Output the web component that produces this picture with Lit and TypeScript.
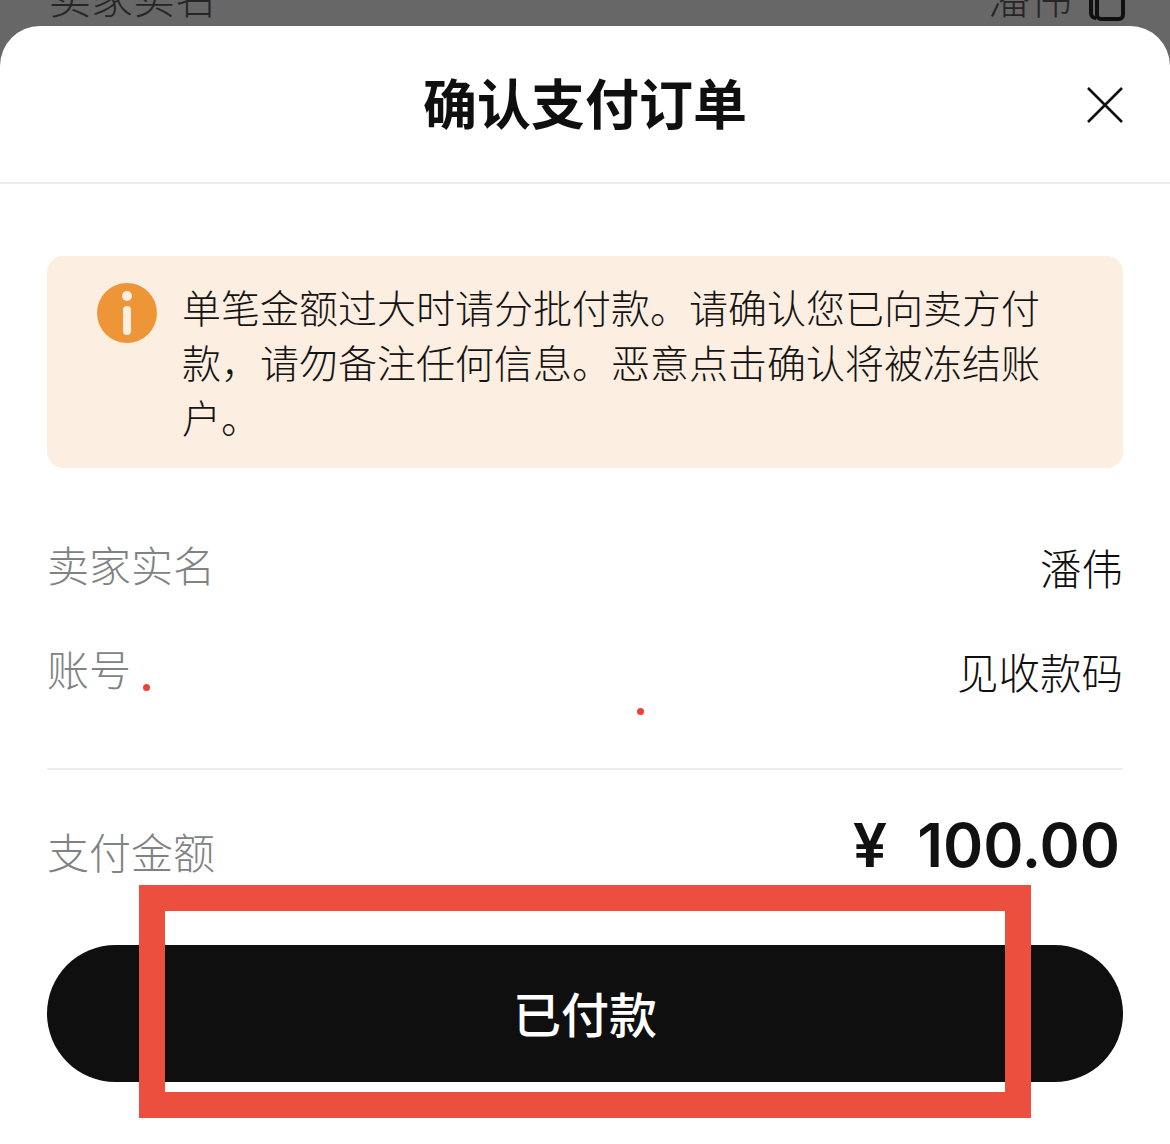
import { LitElement, html, css } from "lit";
import { customElement } from "lit/decorators.js";

@customElement("app-root")
export class AppRoot extends LitElement {
  static styles = css`
    :host {
      display: block;
      width: 1170px;
      height: 1144px;
      position: relative;
      overflow: hidden;
      background: #676767;
      font-family: "Noto Sans CJK SC", "Noto Sans", sans-serif;
      color: #0f0f0f;
    }
    .behind {
      height: 26px;
      overflow: hidden;
      box-sizing: border-box;
      padding: 0 45px 0 49px;
      color: #262626;
    }
    .behind-row {
      display: flex;
      justify-content: space-between;
      height: 60px;
      margin-top: -34px;
      font-size: 42px;
      font-weight: 300;
      line-height: 60px;
    }
    .behind-right { display: flex; gap: 17px; align-items: flex-start; }
    .behind-right svg { margin-top: 34px; flex: none; }
    .sheet {
      height: 1118px;
      background: #fff;
      border-radius: 40px 40px 0 0;
    }
    .header {
      height: 158px;
      box-sizing: border-box;
      border-bottom: 2px solid #ececec;
      display: flex;
      align-items: center;
      justify-content: center;
      position: relative;
    }
    .title { font-size: 54px; font-weight: 700; line-height: 78px; margin-top: -5px; }
    .close { position: absolute; left: 1086px; top: 60px; }
    .body { padding: 72px 47px 0; }
    .alert {
      height: 212px;
      box-sizing: border-box;
      background: #fceee0;
      border-radius: 16px;
      padding: 27px 76px 0 50px;
      display: flex;
      gap: 26px;
    }
    .alert svg { flex: none; }
    .alert-text {
      font-size: 39px;
      font-weight: 300;
      line-height: 55px;
      color: #141414;
      width: 860px;
      flex: none;
      margin: -4px 0 0 -1px;
    }
    .rows { padding-top: 66px; border-bottom: 2px solid #ececec; height: 234px; }
    .row {
      display: flex;
      justify-content: space-between;
      align-items: center;
      height: 60px;
    }
    .row + .row { margin-top: 44px; }
    .label { color: #7f8382; font-size: 42px; font-weight: 300; line-height: 60px; }
    .value { color: #0f0f0f; font-size: 41.5px; font-weight: 300; line-height: 60px; margin-top: 6px; }
    .pay { position: relative; display: flex; justify-content: space-between; align-items: flex-start; height: 126px; margin-top: 48px; }
    .pay .label { margin-top: 3px; }
    .amount {
      font-family: "Inter", "Noto Sans CJK SC", sans-serif;
      font-size: 61px;
      font-weight: 600;
      line-height: 70px;
      padding-right: 3px;
      display: flex;
      gap: 30px;
      color: #111;
      margin-top: -8px;
    }
    .btn {
      height: 137px;
      border-radius: 69px;
      background: #0f0f0f;
      color: #fff;
      font-size: 48px;
      font-weight: 500;
      line-height: 70px;
      padding-bottom: 4px;
      box-sizing: border-box;
      display: flex;
      align-items: center;
      justify-content: center;
      margin-top: 1px;
    }
    .annot {
      position: absolute;
      left: 139px;
      top: 885px;
      width: 892px;
      height: 233px;
      box-sizing: border-box;
      border: 26px solid #ec4f3e;
    }
    .dot {
      position: absolute;
      width: 7px;
      height: 7px;
      border-radius: 50%;
      background: #ea4335;
    }
    .dot.a { left: 143px; top: 684px; }
    .dot.b { left: 637px; top: 708px; }
  `;

  render() {
    return html`
      <div class="behind">
        <div class="behind-row">
          <span>卖家实名</span>
          <span class="behind-right">
            <span>潘伟</span>
            <svg width="36" height="40" viewBox="0 0 36 40" fill="none" stroke="#111" stroke-width="4">
              <rect x="8" y="-8" width="26" height="27" rx="4"></rect>
              <path d="M2 0v13a5 5 0 0 0 5 5"></path>
            </svg>
          </span>
        </div>
      </div>
      <div class="sheet">
        <div class="header">
          <div class="title">确认支付订单</div>
          <svg class="close" width="38" height="38" viewBox="0 0 38 38" stroke="#111" stroke-width="2.6" fill="none">
            <path d="M2 2 36 36M36 2 2 36"></path>
          </svg>
        </div>
        <div class="body">
          <div class="alert">
            <svg width="60" height="60" viewBox="0 0 60 60">
              <circle cx="30" cy="30" r="30" fill="#ee9637"></circle>
              <circle cx="30" cy="13" r="5" fill="#fceee0"></circle>
              <rect x="26" y="23" width="8" height="29" rx="4" fill="#fceee0"></rect>
            </svg>
            <div class="alert-text">单笔金额过大时请分批付款。请确认您已向卖方付款，请勿备注任何信息。恶意点击确认将被冻结账户。</div>
          </div>
          <div class="rows">
            <div class="row"><span class="label">卖家实名</span><span class="value">潘伟</span></div>
            <div class="row"><span class="label">账号</span><span class="value">见收款码</span></div>
          </div>
          <div class="pay">
            <span class="label">支付金额</span>
            <span class="amount"><span>¥</span><span>100.00</span></span>
          </div>
          <div class="btn">已付款</div>
        </div>
      </div>
      <div class="dot a"></div>
      <div class="dot b"></div>
      <div class="annot"></div>
    `;
  }
}
